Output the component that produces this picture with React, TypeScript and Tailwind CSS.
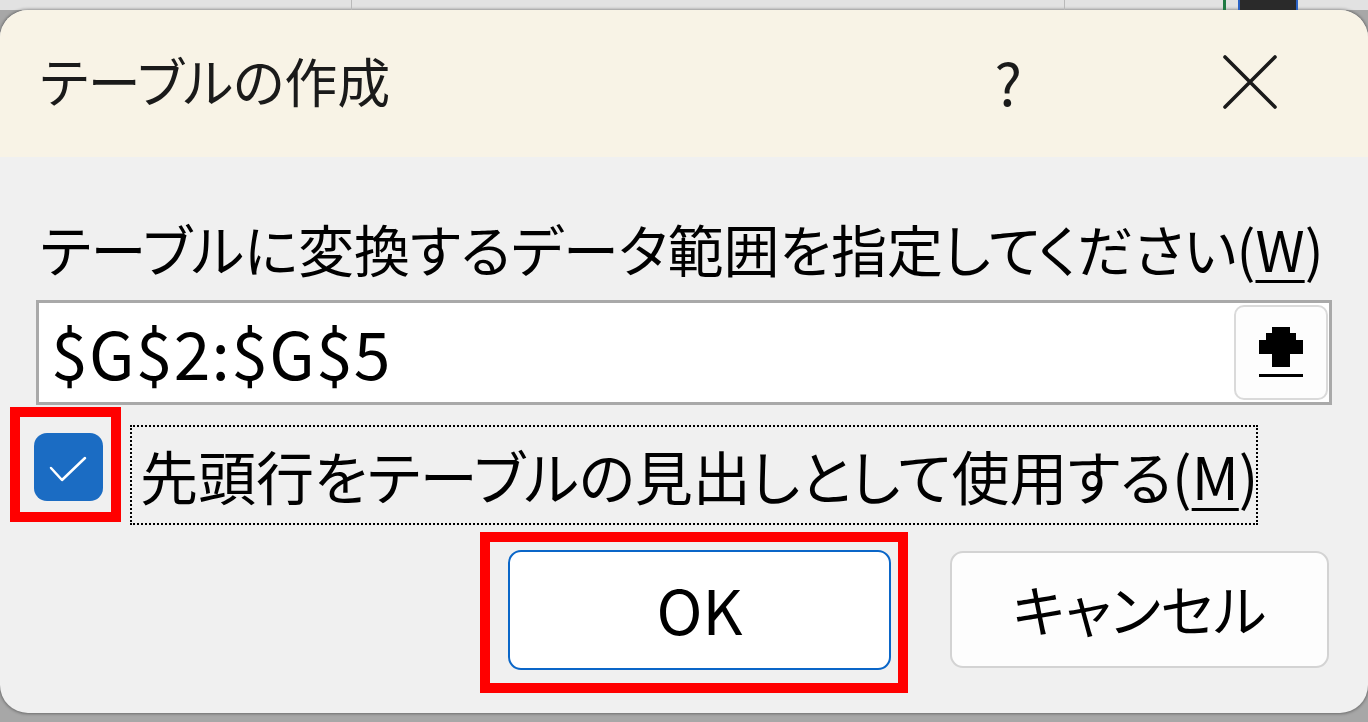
function UploadArrow() {
  return (
    <svg width="44" height="51" viewBox="0 0 44 51" className="block">
      <path d="M13 0H31V6H37V13H44V27H31V40H13V27H0V13H7V6H13Z" fill="#000" />
      <rect x="0" y="47" width="44" height="3" fill="#000" />
    </svg>
  )
}

function CheckMark() {
  return (
    <svg width="69" height="68" viewBox="0 0 69 68" className="block">
      <path d="M17 35 L28 47 L51 25" fill="none" stroke="#fff" strokeWidth="2.5" strokeLinecap="round" strokeLinejoin="round" />
    </svg>
  )
}

function CloseGlyph() {
  return (
    <svg width="56" height="54" viewBox="0 0 56 54" className="block">
      <path d="M3 2 L53 52 M53 2 L3 52" stroke="#1a1a1a" strokeWidth="3.6" strokeLinecap="round" />
    </svg>
  )
}

export default function App() {
  return (
    <div className="w-[1368px] h-[722px] overflow-hidden bg-[#a7a7a7] font-['Noto_Sans_CJK_JP',sans-serif] [font-feature-settings:'palt'] text-black">
      {/* spreadsheet peeking out above the dialog */}
      <div className="flex h-[10px] bg-[#e2e2e2]">
        <div className="w-[352px] border-r border-[#b9b9b9]" />
        <div className="w-[713px] border-r border-[#b9b9b9]" />
        <div className="w-[158px]" />
        <div className="w-[3px] bg-[#1f7a44]" />
        <div className="w-[12px]" />
        <div className="w-[60px] bg-[#2a2a2a] border-x-2 border-[#2b62c4]" />
      </div>

      <div className="flex flex-col h-[703px] w-full rounded-[28px] overflow-hidden bg-[#f0f0f0] shadow-[0_0_3px_1px_rgba(0,0,0,0.35)]">
        {/* title bar */}
        <div className="flex items-center h-[147px] bg-[#f8f3e6] shrink-0">
          <div className="ml-[40px] text-[53px] leading-none text-[#1a1a1a] pb-[6px]">テーブルの作成</div>
          <div className="ml-auto text-[58px] leading-none text-[#1a1a1a] pb-[6px]">?</div>
          <div className="ml-[200px] mr-[90px] pb-[4px]">
            <CloseGlyph />
          </div>
        </div>

        {/* prompt */}
        <div className="flex items-center h-[143px] pt-[38px] pl-[40px] shrink-0">
          <span className="text-[56px] leading-none whitespace-nowrap">
            テーブルに変換するデータ範囲を指定してください(<span className="underline underline-offset-[8px] decoration-[3px]">W</span>)
          </span>
        </div>

        {/* range input */}
        <div className="flex ml-[36px] w-[1296px] h-[105px] bg-white border-[3px] border-[#a9a9a9] shrink-0">
          <div className="flex items-center flex-1 pl-[12px] text-[66px] leading-none tracking-[1.3px] pb-[4px]">$G$2:$G$5</div>
          <div className="flex items-center justify-center w-[94px] my-[2px] mr-px bg-[#fdfdfd] border-2 border-[#dadada] rounded-[10px]">
            <UploadArrow />
          </div>
        </div>

        {/* header checkbox */}
        <div className="flex items-start h-[120px] shrink-0">
          <div className="mt-[2px] ml-[10px] w-[111px] h-[115px] border-[10px] border-[#ff0000] pl-[14px] pt-[16px]">
            <div className="w-[69px] h-[68px] rounded-[13px] bg-[#1b6cc3]">
              <CheckMark />
            </div>
          </div>
          <div className="mt-[20px] ml-[9px] w-[1128px] h-[100px] border-2 border-dotted border-black flex items-center pl-[8px]">
            <span className="text-[58px] leading-none whitespace-nowrap">
              先頭行をテーブルの見出しとして使用する(<span className="underline underline-offset-[8px] decoration-[3px]">M</span>)
            </span>
          </div>
        </div>

        {/* buttons */}
        <div className="flex items-start mt-[7px] shrink-0">
          <div className="ml-[480px] w-[428px] h-[161px] border-[10px] border-[#ff0000] pl-[18px] pt-[8px]">
            <div className="flex items-center justify-center w-[383px] h-[120px] bg-white border-2 border-[#0a66c8] rounded-[13px] text-[62px] leading-none pb-[4px]">
              OK
            </div>
          </div>
          <div className="ml-[42px] mt-[19px] flex items-center justify-center w-[379px] h-[117px] bg-[#fdfdfd] border-2 border-[#d3d3d3] rounded-[13px] text-[56px] leading-none pb-[4px]">
            キャンセル
          </div>
        </div>
      </div>
    </div>
  )
}
